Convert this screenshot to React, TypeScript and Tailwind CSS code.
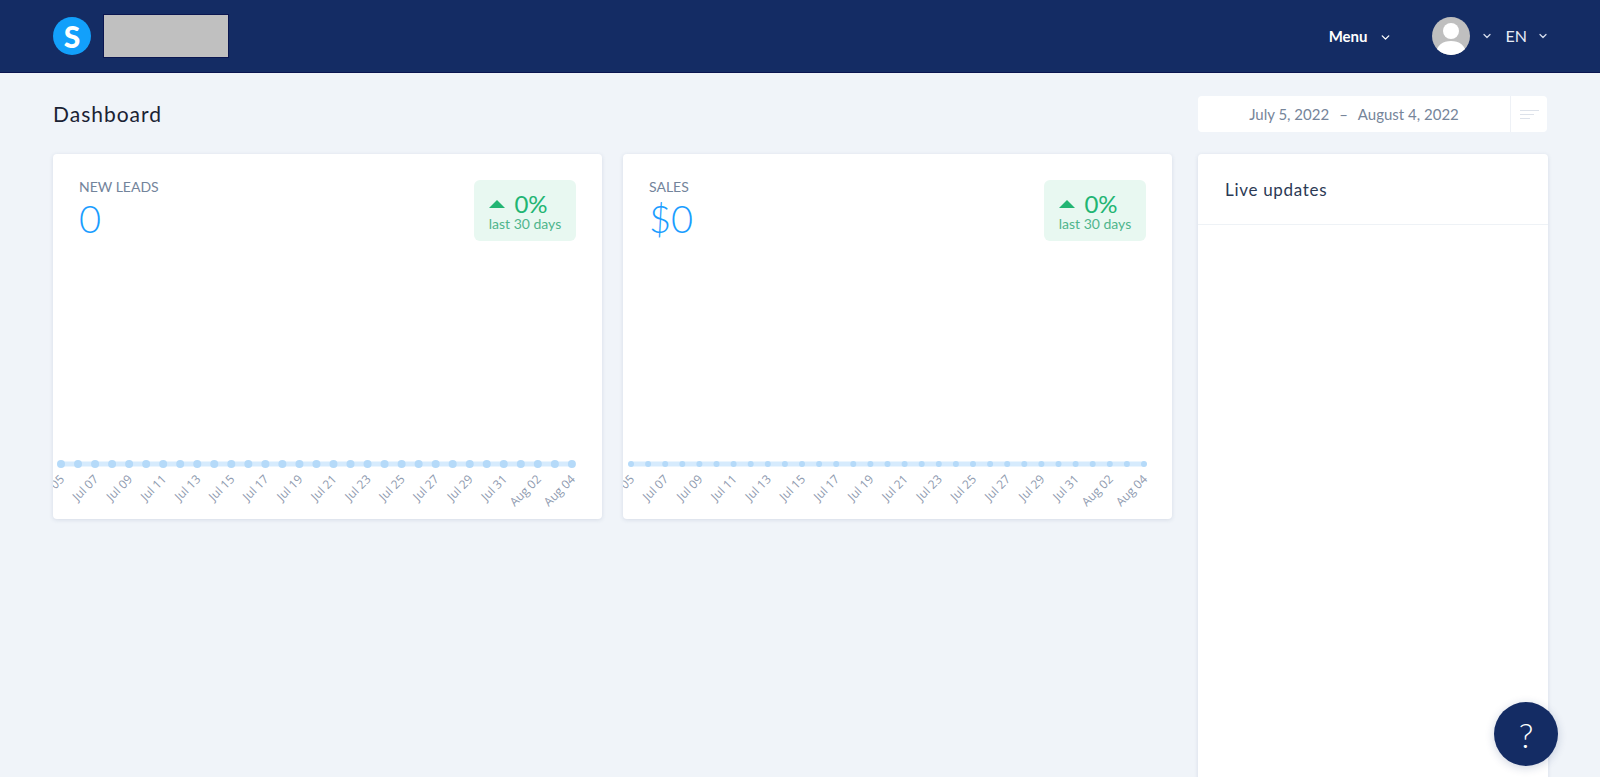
import React from 'react';
import { ChevronDown } from 'lucide-react';

const DAYS = ['05', '07', '09', '11', '13', '15', '17', '19', '21', '23', '25', '27', '29', '31'];
const TICKS = [...DAYS.map(d => `Jul ${d}`), 'Aug 02', 'Aug 04'];

const LineChart: React.FC<{ left: number; step: number; radius: number }> = ({ left, step, radius }) => {
    const points = Array.from({ length: 31 }, (_, i) => left + i * step);
    return (
        <svg width="549" height="65" className="block shrink-0">
            <line x1={left} x2={points[30]} y1="10" y2="10" stroke="#d6ebfd" strokeWidth="5" />
            {points.map((x, i) => (
                <circle key={i} cx={x} cy="10" r={radius} fill="#b5daf9" />
            ))}
            {TICKS.map((label, i) => (
                <text
                    key={label}
                    x={points[i * 2] + 4}
                    y="26"
                    textAnchor="end"
                    fontSize="12"
                    fill="#8f9bb0"
                    fontFamily="'Open Sans', sans-serif"
                    transform={`rotate(-45 ${points[i * 2] + 4} 26)`}
                >
                    {label}
                </text>
            ))}
        </svg>
    );
};

const StatCard: React.FC<{ label: string; value: string; left: number; step: number; radius: number }> = ({ label, value, left, step, radius }) => (
    <div className="w-[549px] h-[365px] shrink-0 bg-white rounded-[4px] shadow-[0_1px_4px_rgba(60,80,120,0.14)] overflow-hidden flex flex-col">
        <div className="flex justify-between px-[26px] pt-[25px] h-[300px] shrink-0">
            <div>
                <p className="text-[14px] leading-[16px] text-[#73849b] uppercase">{label}</p>
                <p className="text-[38px] leading-[40px] text-[#1a9dff] font-light mt-[3px]">{value}</p>
            </div>
            <div className="w-[102px] h-[61px] mt-[1px] bg-[#e8f8f1] rounded-[6px] flex flex-col items-center pt-[11px]">
                <div className="flex items-center gap-[9px] mr-[13px] text-[#22b573] text-[24px] leading-[25px]">
                    <span className="w-0 h-0 border-l-[8px] border-r-[8px] border-b-[8px] border-l-transparent border-r-transparent border-b-[#22b573]" />
                    <span>0%</span>
                </div>
                <span className="text-[14px] leading-[16px] text-[#4fb58c]">last 30 days</span>
            </div>
        </div>
        <LineChart left={left} step={step} radius={radius} />
    </div>
);

const App: React.FC = () => {
    return (
        <div className="h-screen overflow-hidden bg-[#f0f4f9] font-['Lato',sans-serif] relative">
            <header className="h-[73px] bg-[#142c64] border-b border-[#0a1650] flex items-center pl-[53px] pr-[51px]">
                <div className="w-[38px] h-[38px] rounded-full bg-[#12a0fb] flex items-center justify-center text-white text-[30px] font-black leading-none">S</div>
                <div className="w-[126px] h-[44px] ml-[12px] bg-[#c0c0c0] border border-[#0a1650]" />
                <div className="ml-auto flex items-center text-white">
                    <span className="text-[15px] font-bold">Menu</span>
                    <ChevronDown className="w-[13px] h-[13px] ml-[11px] mt-[3px]" strokeWidth={2.5} />
                    <div className="w-[38px] h-[38px] ml-[40px] rounded-full bg-[#bfbfbf] overflow-hidden">
                        <svg viewBox="0 0 38 38" className="w-full h-full">
                            <circle cx="19" cy="14" r="8" fill="#fff" />
                            <path d="M4 38c0-10 7-14 15-14s15 4 15 14z" fill="#fff" />
                        </svg>
                    </div>
                    <ChevronDown className="w-[12px] h-[12px] ml-[11px] text-[#d5dcec]" strokeWidth={2.5} />
                    <span className="text-[16px] ml-[13px] text-[#e6ebf5]">EN</span>
                    <ChevronDown className="w-[12px] h-[12px] ml-[10px] text-[#d5dcec]" strokeWidth={2.5} />
                </div>
            </header>

            <div className="flex items-center justify-between pl-[53px] pr-[53px] h-[81px] pt-[1px]">
                <h1 className="text-[21px] tracking-[1px] text-[#1a2233]">Dashboard</h1>
                <div className="w-[349px] h-[36px] bg-white rounded-[4px] flex items-center">
                    <div className="flex-1 flex justify-center gap-[10px] text-[15px] text-[#76859a]">
                        <span>July 5, 2022</span>
                        <span>–</span>
                        <span>August 4, 2022</span>
                    </div>
                    <div className="w-[37px] h-full border-l border-[#eef1f6] flex flex-col justify-center gap-[3px] pl-[9px]">
                        <span className="block w-[19px] h-[1px] bg-[#dde2ea]" />
                        <span className="block w-[14px] h-[1px] bg-[#dde2ea]" />
                        <span className="block w-[10px] h-[1px] bg-[#dde2ea]" />
                    </div>
                </div>
            </div>

            <main className="flex gap-[21px] pl-[53px] items-start">
                <StatCard label="New Leads" value="0" left={8} step={17.03} radius={4} />
                <StatCard label="Sales" value="$0" left={8} step={17.1} radius={3} />
                <aside className="w-[350px] h-[640px] shrink-0 ml-[5px] bg-white rounded-[4px] shadow-[0_1px_4px_rgba(60,80,120,0.14)]">
                    <div className="h-[71px] border-b border-[#eef2f6] flex items-center pl-[27px] pt-[2px] text-[17px] tracking-[0.7px] text-[#2b3a55]">Live updates</div>
                </aside>
            </main>

            <button className="absolute left-[1494px] top-[702px] w-[64px] h-[64px] rounded-full bg-[#142c64] text-white text-[34px] font-light flex items-center justify-center shadow-[0_2px_10px_rgba(20,44,100,0.2)]">?</button>
        </div>
    );
};

export default App;
